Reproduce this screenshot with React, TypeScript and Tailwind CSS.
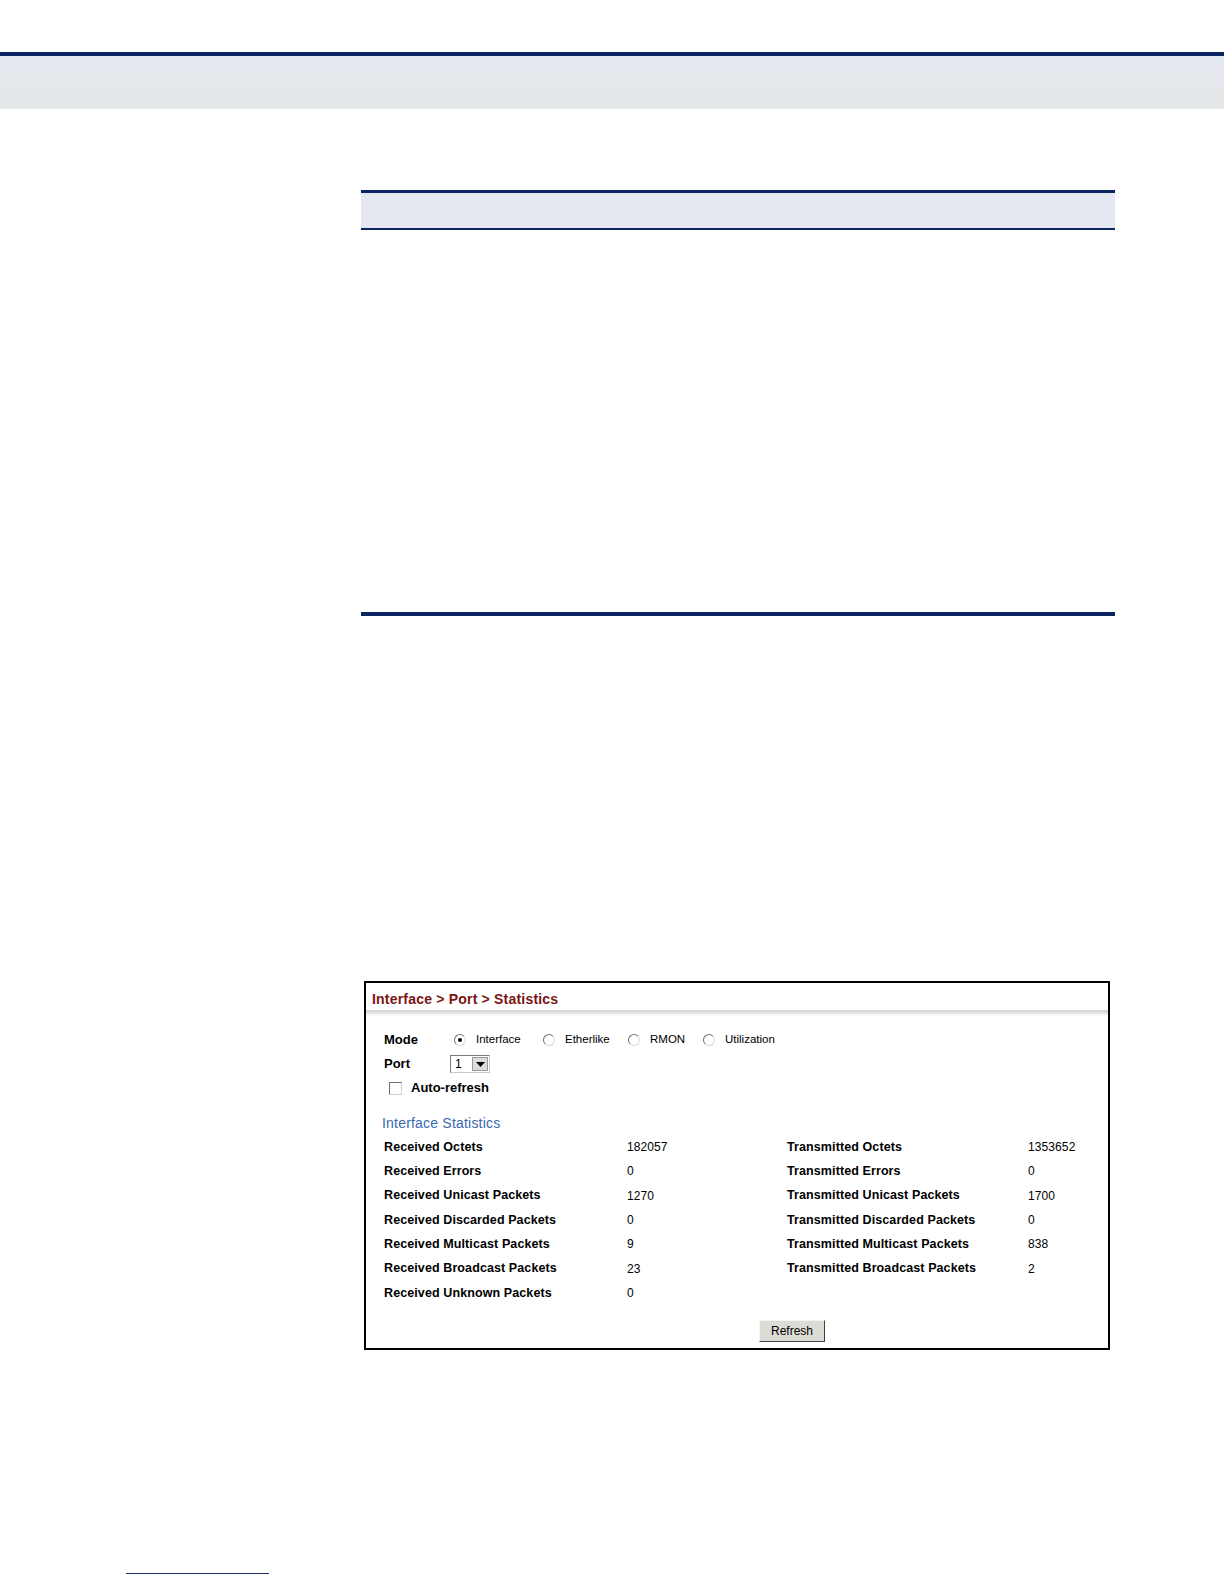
import React from "react";

type Stat = { label: string; value: string };

const received: Stat[] = [
  { label: "Received Octets", value: "182057" },
  { label: "Received Errors", value: "0" },
  { label: "Received Unicast Packets", value: "1270" },
  { label: "Received Discarded Packets", value: "0" },
  { label: "Received Multicast Packets", value: "9" },
  { label: "Received Broadcast Packets", value: "23" },
  { label: "Received Unknown Packets", value: "0" },
];

const transmitted: Stat[] = [
  { label: "Transmitted Octets", value: "1353652" },
  { label: "Transmitted Errors", value: "0" },
  { label: "Transmitted Unicast Packets", value: "1700" },
  { label: "Transmitted Discarded Packets", value: "0" },
  { label: "Transmitted Multicast Packets", value: "838" },
  { label: "Transmitted Broadcast Packets", value: "2" },
];

const Radio: React.FC<{ checked?: boolean; label: string; className?: string }> = ({
  checked,
  label,
  className,
}) => (
  <div className={"flex items-center " + (className ?? "")}>
    <span className="flex h-[12px] w-[12px] items-center justify-center rounded-full border border-t-[#707070] border-l-[#707070] border-r-[#d8d8d8] border-b-[#d8d8d8] bg-white">
      {checked && <span className="h-[4px] w-[4px] rounded-full bg-black" />}
    </span>
    <span className="ml-[10px]">{label}</span>
  </div>
);

const App: React.FC = () => {
  return (
    <div className="relative h-[1584px] w-[1224px] bg-white font-['Liberation_Sans',Arial,sans-serif] text-black">
      {/* page header band */}
      <div className="h-[52px]" />
      <div className="h-[4px] bg-[#0b2560]" />
      <div className="h-[53px] bg-gradient-to-b from-[#e4e8f0] to-[#e5e8e8]" />

      <div className="ml-[361px] w-[754px]">
        {/* table header */}
        <div className="mt-[81px] h-[3px] bg-[#0b2560]" />
        <div className="h-[35px] bg-[#e5e8f0]" />
        <div className="h-[2px] bg-[#0b2560]" />

        <div className="mt-[382px] h-[4px] bg-[#0b2560]" />

        {/* web UI screenshot */}
        <div className="ml-[3px] mt-[365px] h-[369px] w-[746px] border-2 border-black">
          <div className="flex h-[27px] items-center pl-[6px] pt-[5px] text-[14px] font-bold tracking-[0.2px] text-[#7c1414]">
            Interface &gt; Port &gt; Statistics
          </div>
          <div className="h-[6px] bg-gradient-to-b from-[#d0d0d0] via-[#e4e4e4] to-white" />

          <div className="pl-[18px] text-[12.5px]">
            <div className="mt-[12px] flex h-[24px] items-center">
              <span className="w-[70px] text-[13px] font-bold">Mode</span>
              <div className="flex items-center text-[11.5px]">
                <Radio checked label="Interface" className="w-[89px]" />
                <Radio label="Etherlike" className="w-[85px]" />
                <Radio label="RMON" className="w-[75px]" />
                <Radio label="Utilization" />
              </div>
            </div>

            <div className="flex h-[24px] items-center">
              <span className="w-[66px] text-[13px] font-bold">Port</span>
              <div className="flex h-[18px] w-[40px] items-center border border-t-[#7a7a7a] border-l-[#7a7a7a] border-r-[#c8c8c8] border-b-[#c8c8c8] bg-white text-[12px]">
                <span className="flex-1 pl-[4px]">1</span>
                <span className="mr-[1px] flex h-[14px] w-[16px] items-center justify-center border border-[#9a9a9a] bg-[#dcdcdc]">
                  <svg width="9" height="5" viewBox="0 0 9 5">
                    <path d="M0 0h9L4.5 5z" fill="#000" />
                  </svg>
                </span>
              </div>
            </div>

            <div className="flex h-[24px] items-center pl-[5px]">
              <span className="h-[13px] w-[13px] border border-t-[#707070] border-l-[#707070] border-r-[#d0d0d0] border-b-[#d0d0d0] bg-white" />
              <span className="ml-[9px] text-[13px] font-bold">Auto-refresh</span>
            </div>

            <div className="mt-[11px] flex h-[24px] items-center text-[14px] tracking-[0.2px] text-[#3a68b0]">
              <span className="-ml-[2px]">Interface Statistics</span>
            </div>

            <div className="grid grid-cols-[243px_160px_241px_1fr] tracking-[0.1px]">
              {received.map((r, i) => (
                <React.Fragment key={r.label}>
                  <div className="flex h-[24.3px] items-center font-bold">{r.label}</div>
                  <div className="flex h-[24.3px] items-center text-[12px]">{r.value}</div>
                  <div className="flex h-[24.3px] items-center font-bold">{transmitted[i]?.label ?? ""}</div>
                  <div className="flex h-[24.3px] items-center text-[12px]">{transmitted[i]?.value ?? ""}</div>
                </React.Fragment>
              ))}
            </div>

            <div className="mt-[15px] flex">
              <button className="ml-[375px] flex h-[22px] w-[66px] items-center justify-center border border-t-[#f4f4f4] border-l-[#f4f4f4] border-r-[#404040] border-b-[#404040] bg-[#dcdcd6] text-[12px]">
                Refresh
              </button>
            </div>
          </div>
        </div>
      </div>

      {/* footer rule */}
      <div className="absolute left-[126px] top-[1573px] h-[1px] w-[143px] bg-[#1b2f66]" />
    </div>
  );
};

export default App;
